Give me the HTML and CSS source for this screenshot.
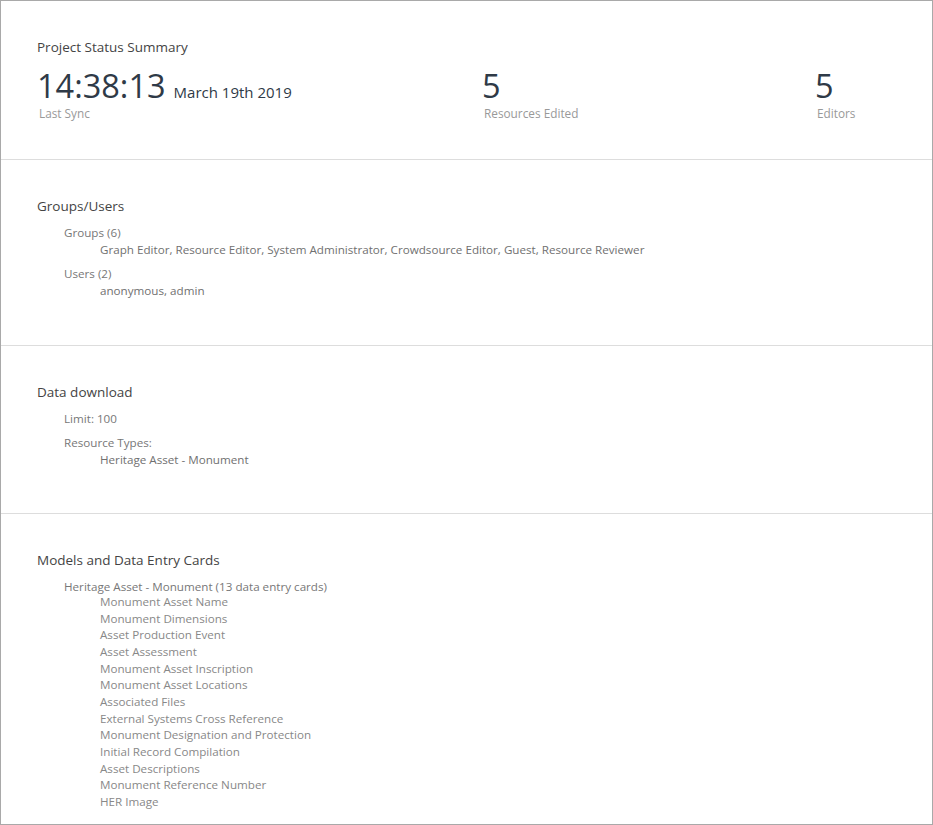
FILE: index.html
```html
<!DOCTYPE html>
<html>
<head>
<meta charset="utf-8">
<link rel="stylesheet" href="styles.css">
</head>
<body>
<div class="panel">
  <section class="sec sec-summary">
    <h2 class="sec-title">Project Status Summary</h2>
    <div class="stats">
      <div class="stat stat-sync">
        <div class="stat-value"><span class="big">14:38:13</span> <span class="date">March 19th 2019</span></div>
        <div class="stat-label">Last Sync</div>
      </div>
      <div class="stat stat-res">
        <div class="stat-value"><span class="big">5</span></div>
        <div class="stat-label">Resources Edited</div>
      </div>
      <div class="stat stat-ed">
        <div class="stat-value"><span class="big">5</span></div>
        <div class="stat-label">Editors</div>
      </div>
    </div>
  </section>

  <section class="sec">
    <h2 class="sec-title">Groups/Users</h2>
    <div class="group">
      <div class="group-label">Groups (6)</div>
      <div class="group-items">Graph Editor, Resource Editor, System Administrator, Crowdsource Editor, Guest, Resource Reviewer</div>
    </div>
    <div class="group">
      <div class="group-label">Users (2)</div>
      <div class="group-items">anonymous, admin</div>
    </div>
  </section>

  <section class="sec sec-download">
    <h2 class="sec-title">Data download</h2>
    <div class="group">
      <div class="group-label">Limit: 100</div>
    </div>
    <div class="group">
      <div class="group-label">Resource Types:</div>
      <div class="group-items">Heritage Asset - Monument</div>
    </div>
  </section>

  <section class="sec sec-last">
    <h2 class="sec-title">Models and Data Entry Cards</h2>
    <div class="group">
      <div class="group-label">Heritage Asset - Monument (13 data entry cards)</div>
      <ul class="card-list">
        <li>Monument Asset Name</li>
        <li>Monument Dimensions</li>
        <li>Asset Production Event</li>
        <li>Asset Assessment</li>
        <li>Monument Asset Inscription</li>
        <li>Monument Asset Locations</li>
        <li>Associated Files</li>
        <li>External Systems Cross Reference</li>
        <li>Monument Designation and Protection</li>
        <li>Initial Record Compilation</li>
        <li>Asset Descriptions</li>
        <li>Monument Reference Number</li>
        <li>HER Image</li>
      </ul>
    </div>
  </section>
</div>
</body>
</html>
```

FILE: styles.css
```css
html, body {
  margin: 0;
  padding: 0;
  background: #fff;
}
body {
  font-family: "Open Sans", "Liberation Sans", sans-serif;
  color: #777;
}
.panel {
  box-sizing: border-box;
  width: 933px;
  height: 825px;
  border: 1px solid #a9a9a9;
  background: #fff;
  overflow: hidden;
}
.sec {
  padding: 37px 37px 46px 36px;
  border-bottom: 1px solid #ddd;
}
.sec-last {
  border-bottom: none;
}
.sec-title {
  margin: 0;
  font-size: 13.5px;
  line-height: 18px;
  font-weight: 400;
  color: #444;
}
.stats {
  display: grid;
  grid-template-columns: 445px 333px 1fr;
  margin-top: 10px;
}
.stat-value {
  display: flex;
  align-items: baseline;
  gap: 8px;
  height: 40px;
  color: #2f3a47;
}
.big {
  font-size: 32.5px;
  line-height: 40px;
}
.date {
  font-size: 15px;
  line-height: 20px;
}
.stat-label {
  font-size: 11.8px;
  line-height: 14px;
  color: #999;
  margin-left: 2px;
}
.sec-summary {
  padding-bottom: 39px;
}
.sec-download {
  padding-bottom: 45px;
}
.group {
  margin-top: 9px;
  padding-left: 27px;
  font-size: 11.65px;
  line-height: 17px;
}
.group + .group {
  margin-top: 7px;
}
.group-label {
  color: #777;
}
.group-items {
  padding-left: 36px;
  color: #707070;
}
.card-list {
  list-style: none;
  margin: -1px 0 0 0;
  padding: 0 0 0 36px;
  line-height: 16.67px;
  color: #888;
}
```
